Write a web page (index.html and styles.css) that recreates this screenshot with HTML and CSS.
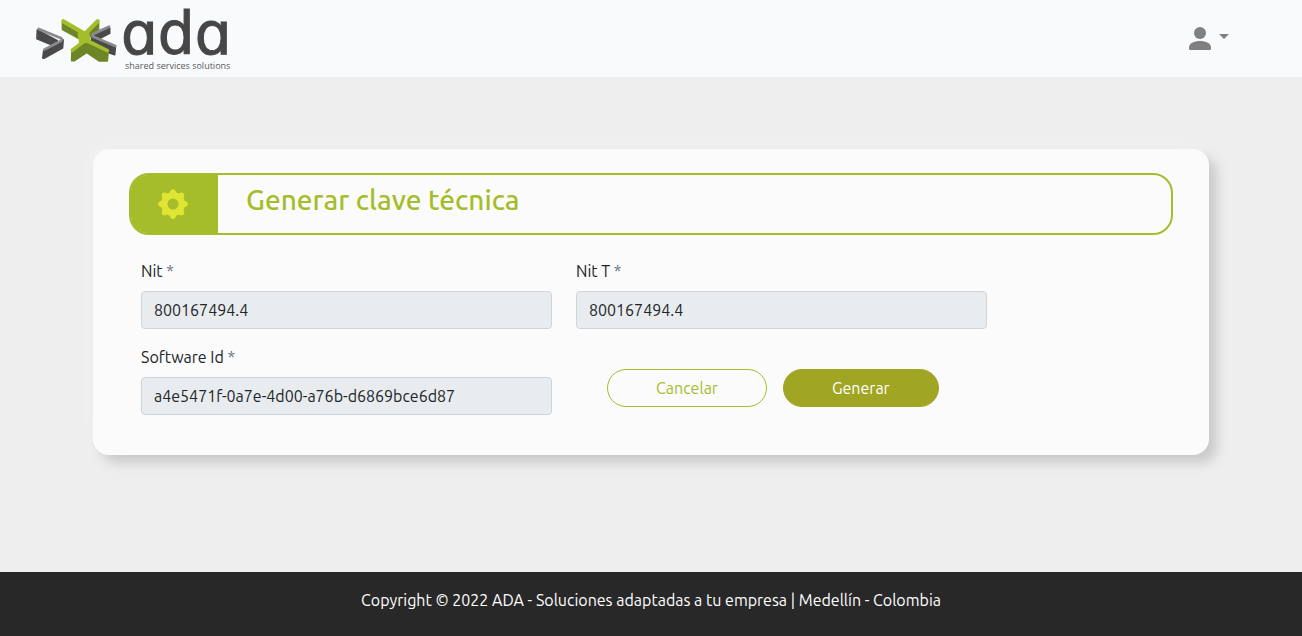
FILE: index.html
```
<!DOCTYPE html>
<html lang="es">
<head>
    <meta charset="UTF-8">
    <meta name="viewport" content="width=device-width, initial-scale=1">
    <title>Generar clave técnica</title>
    <link rel="stylesheet" href="styles.css">
</head>
<body>
    <header class="navbar">
        <a href="#" class="brand" aria-label="ADA">
            <svg class="logo" viewBox="0 0 200 77" width="200" height="77">
                <!-- Arrows -->
                <g transform="scale(.3333)" stroke-linejoin="round" stroke-linecap="round">
                    <path d="M22 90 L21 116 L61 133 L82 122 Z" fill="#4a4a4b" stroke="#4a4a4b" stroke-width="5"/>
                    <path d="M42 151 L39 174 L43 174 L97 144 L99 120 Z" fill="#4a4a4b" stroke="#4a4a4b" stroke-width="6"/>
                    <path d="M26 87 L92 114 Q100 119 91 124 L43 149" fill="none" stroke="#8a8a8c" stroke-width="8"/>
                    <path d="M98 68 L98 88 L146 114 L160 122 L180 110 L205 88 L205 68 L165 104 Z" fill="#6d8427" stroke="#6d8427" stroke-width="6"/>
                    <path d="M100 64 L158 98 Q165 102 171 96 L203 64" fill="none" stroke="#a4be2b" stroke-width="13"/>
                    <path d="M186 110 L256 142 L254 164 L236 158 L184 124 Z" fill="#4a4a4b" stroke="#4a4a4b" stroke-width="5"/>
                    <path d="M192 107 L239 84 L239 100 L206 117 Z" fill="#4a4a4b" stroke="#4a4a4b" stroke-width="5"/>
                    <path d="M237 80 L189 102 Q183 106 190 110 L256 138" fill="none" stroke="#8a8a8c" stroke-width="8"/>
                    <path d="M127 154 L126 181 L133 181 L170 156 L209 182 L231 182 L233 156 L168 124 Z" fill="#6d8427" stroke="#6d8427" stroke-width="7"/>
                    <path d="M142 98 L178 98 L182 122 L148 132 Z" fill="#a4be2b"/>
                    <path d="M127 151 L157 128 Q167 120 179 126 L232 152" fill="none" stroke="#a4be2b" stroke-width="11"/>
                </g>
                <text class="logo-name" x="91" y="54">&#x251;d&#x251;</text>
                <text class="logo-tagline" x="95" y="69">shared services solutions</text>
            </svg>
        </a>
        <button type="button" class="user-menu" aria-label="Usuario">
            <svg viewBox="0 0 24 24" width="24" height="24" fill="currentColor">
                <circle cx="12" cy="6" r="6"/>
                <path d="M1 22 V21 C1 16 6 14 12 14 S23 16 23 21 V22 Q23 23 22 23 H2 Q1 23 1 22 Z"/>
            </svg>
            <span class="caret"></span>
        </button>
    </header>

    <main class="content">
        <section class="card">
            <div class="card-title">
                <div class="title-icon">
                    <svg viewBox="0 0 30 30" width="30" height="30">
                        <g fill="#dfe532">
                            <circle cx="15" cy="15" r="12"/>
                            <path id="tooth" d="M11 5 Q12 4 12 2.500 Q13 0 15 0 Q17 0 18 2.500 Q18 4 19 5 V25 Q18 26 18 27.500 Q17 30 15 30 Q13 30 12 27.500 Q12 26 11 25 Z"/>
                            <use href="#tooth" transform="rotate(45 15 15)"/>
                            <use href="#tooth" transform="rotate(90 15 15)"/>
                            <use href="#tooth" transform="rotate(135 15 15)"/>
                        </g>
                        <circle cx="15" cy="15" r="5.500" fill="#a5bd2b"/>
                    </svg>
                </div>
                <h1>Generar clave técnica</h1>
            </div>

            <form class="form-grid">
                <div class="field">
                    <label for="nit">Nit <span class="required">*</span></label>
                    <input type="text" id="nit" value="800167494.4" readonly>
                </div>
                <div class="field">
                    <label for="nit-t">Nit T <span class="required">*</span></label>
                    <input type="text" id="nit-t" value="800167494.4" readonly>
                </div>
                <div class="field">
                    <label for="software-id">Software Id <span class="required">*</span></label>
                    <input type="text" id="software-id" value="a4e5471f-0a7e-4d00-a76b-d6869bce6d87" readonly>
                </div>
                <div class="actions">
                    <button type="button" class="btn btn-outline">Cancelar</button>
                    <button type="submit" class="btn btn-primary">Generar</button>
                </div>
            </form>
        </section>
    </main>

    <footer class="footer">Copyright © 2022 ADA - Soluciones adaptadas a tu empresa | Medellín - Colombia</footer>
</body>
</html>
```

FILE: styles.css
```
* {
    box-sizing: border-box;
}

body {
    display: flex;
    flex-direction: column;
    min-height: 100vh;
    margin: 0;
    background: #eeeeee;
    color: #212529;
    font-family: Ubuntu, "Noto Sans", sans-serif;
    font-size: 16px;
    line-height: 24px;
}

/* Top bar */
.navbar {
    display: flex;
    justify-content: space-between;
    align-items: center;
    padding: 0 73px 0 30px;
    background: #f8fafc;
}

.brand,
.logo {
    display: block;
    overflow: visible;
}

.logo-name {
    font-family: "DejaVu Sans", sans-serif;
    font-size: 58px;
    fill: #464646;
    stroke: #464646;
    stroke-width: 1px;
}

.logo-tagline {
    font-family: "Open Sans", sans-serif;
    font-size: 9px;
    fill: #5a5a5a;
}

.user-menu {
    display: flex;
    align-items: center;
    gap: 7px;
    padding: 0;
    border: 0;
    background: none;
    color: #808080;
}

.caret {
    margin-bottom: 4px;
    border-top: 5px solid;
    border-right: 5px solid transparent;
    border-left: 5px solid transparent;
}

/* Card */
.content {
    flex: 1;
    width: 100%;
    max-width: 1140px;
    margin: 0 auto;
    padding: 72px 12px;
}

.card {
    padding: 24px 36px 40px;
    border-radius: 16px;
    background: #fbfbfb;
    box-shadow: 8px 8px 12px #cacaca, -8px -8px 16px #f0f0f0;
}

.card-title {
    display: flex;
    height: 62px;
    margin-bottom: 24px;
    border: 2px solid #a5bd2b;
    border-radius: 20px;
}

.title-icon {
    display: flex;
    justify-content: center;
    align-items: center;
    width: 87px;
    padding-right: 3px;
    border-radius: 17px 0 0 17px;
    background: #a5bd2b;
}

.card-title h1 {
    margin: 8px 28px;
    color: #a5bd2b;
    font-size: 28px;
    font-weight: 500;
    line-height: 34px;
}

/* Form */
.form-grid {
    display: grid;
    grid-template-columns: repeat(2, 5fr) 2fr;
    row-gap: 16px;
}

.field {
    padding: 0 12px;
}

.field:nth-child(odd) {
    grid-column: 1;
}

.field label {
    display: block;
    margin-bottom: 8px;
}

.required {
    color: #6c757d;
}

.field input {
    display: block;
    width: 100%;
    height: 38px;
    padding: 6px 12px;
    border: 1px solid #ced4da;
    border-radius: 4px;
    background: #e9ecef;
    color: #212529;
    font: inherit;
}

.actions {
    display: flex;
    align-items: flex-start;
    gap: 16px;
    padding: 24px 0 0 43px;
}

.btn {
    height: 38px;
    padding: 6px 48px;
    border: 1px solid #a5bd2b;
    border-radius: 20px;
    font: inherit;
}

.btn-outline {
    background: transparent;
    color: #a5bd2b;
}

.btn-primary {
    border-color: #a1a524;
    background: #a1a524;
    color: #ffffff;
}

/* Footer */
.footer {
    padding: 16px 16px 24px;
    background: #282828;
    color: #ffffff;
    text-align: center;
}
```
